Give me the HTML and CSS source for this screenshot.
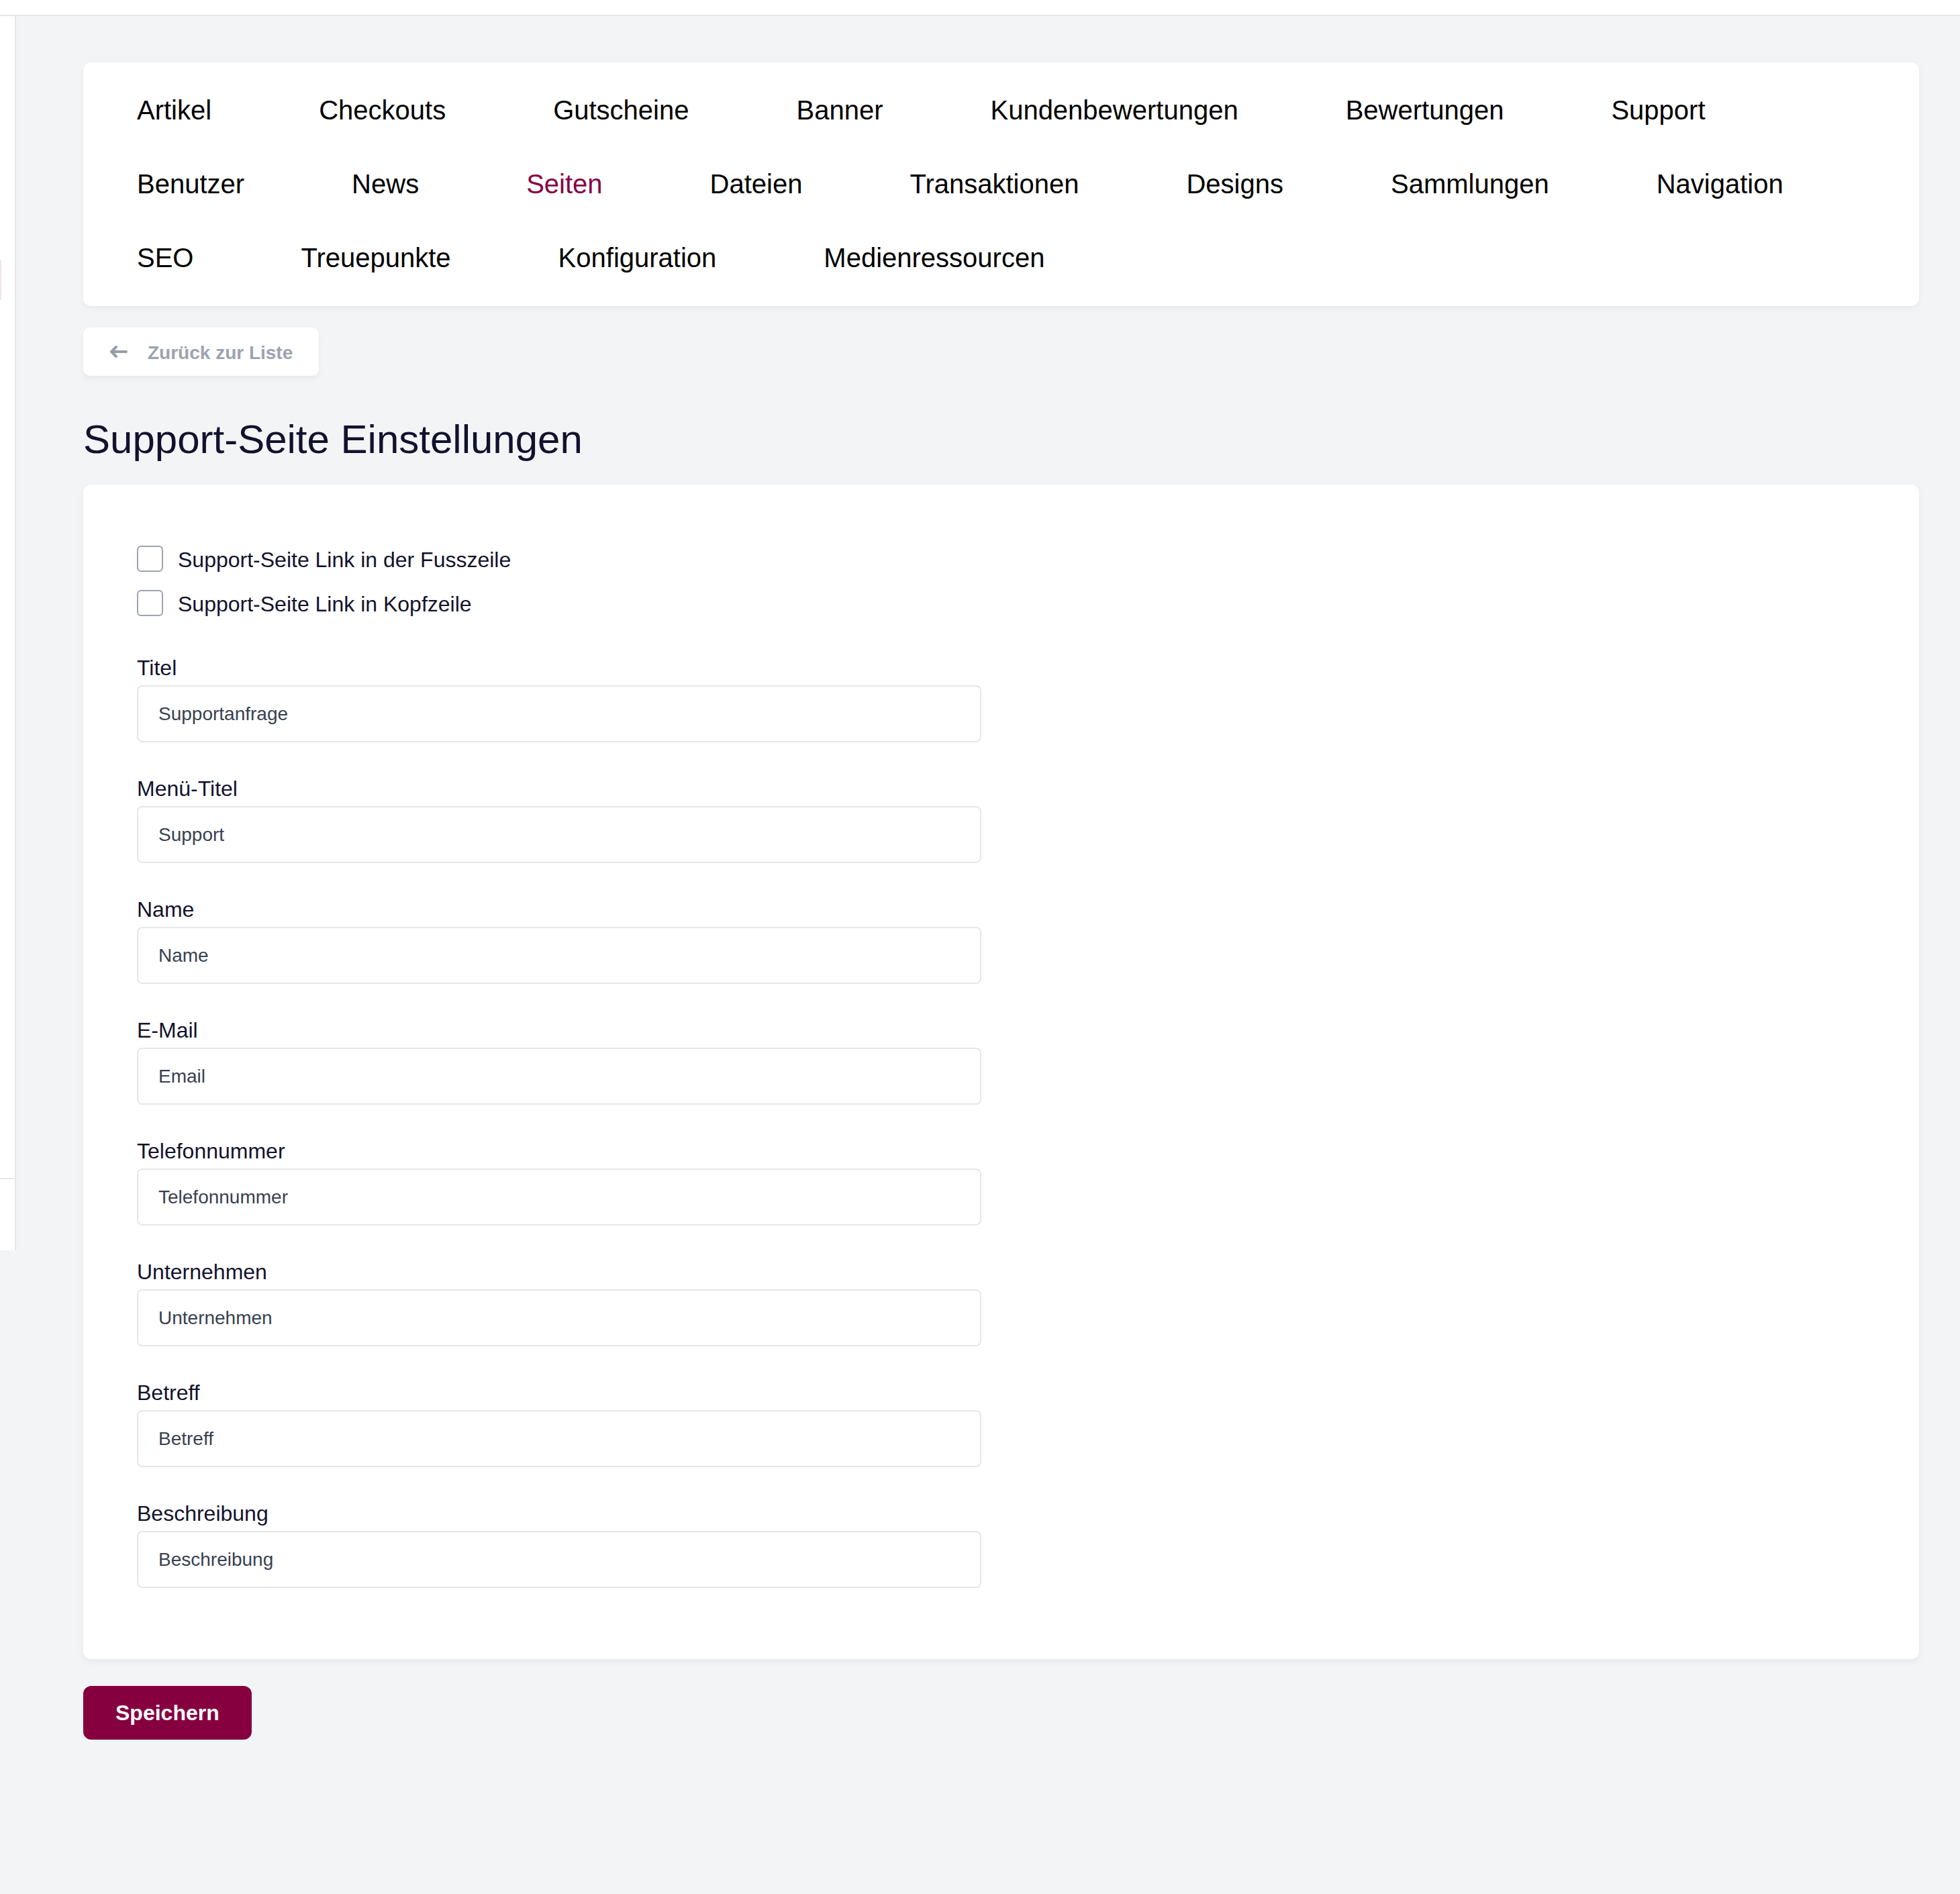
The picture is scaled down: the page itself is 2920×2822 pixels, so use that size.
FILE: index.html
```html
<!DOCTYPE html>
<html lang="de">
<head>
  <meta charset="UTF-8" />
  <meta name="viewport" content="width=device-width, initial-scale=1.0" />
  <title>Support-Seite Einstellungen</title>
  <link rel="stylesheet" href="styles.css">
</head>
<body>
  <div class="topbar"></div>

  <div class="layout">
    <aside class="sidebar">
      <div class="sidebar-main">
        <span class="sidebar-active"></span>
      </div>
      <div class="sidebar-foot"></div>
    </aside>

    <main class="content">
      <nav class="tabs">
        <a href="#">Artikel</a>
        <a href="#">Checkouts</a>
        <a href="#">Gutscheine</a>
        <a href="#">Banner</a>
        <a href="#">Kundenbewertungen</a>
        <a href="#">Bewertungen</a>
        <a href="#">Support</a>
        <a href="#">Benutzer</a>
        <a href="#">News</a>
        <a href="#" class="active">Seiten</a>
        <a href="#">Dateien</a>
        <a href="#">Transaktionen</a>
        <a href="#">Designs</a>
        <a href="#">Sammlungen</a>
        <a href="#">Navigation</a>
        <a href="#">SEO</a>
        <a href="#">Treuepunkte</a>
        <a href="#">Konfiguration</a>
        <a href="#">Medienressourcen</a>
      </nav>

      <a href="#" class="back-btn">
        <svg width="26" height="18" viewBox="0 0 26 18" fill="none" stroke="currentColor" stroke-width="4" stroke-linecap="round" stroke-linejoin="round">
          <path d="M2 9h22M9 2L2 9l7 7" />
        </svg>
        <span>Zurück zur Liste</span>
      </a>

      <h1 class="page-title">Support-Seite Einstellungen</h1>

      <form class="settings-card" onsubmit="return false">
        <div class="checks">
          <label class="check"><input type="checkbox"><span>Support-Seite Link in der Fusszeile</span></label>
          <label class="check"><input type="checkbox"><span>Support-Seite Link in Kopfzeile</span></label>
        </div>

        <div class="field">
          <label for="title">Titel</label>
          <input id="title" type="text" value="Supportanfrage">
        </div>
        <div class="field">
          <label for="menuTitle">Menü-Titel</label>
          <input id="menuTitle" type="text" value="Support">
        </div>
        <div class="field">
          <label for="name">Name</label>
          <input id="name" type="text" placeholder="Name">
        </div>
        <div class="field">
          <label for="email">E-Mail</label>
          <input id="email" type="text" placeholder="Email">
        </div>
        <div class="field">
          <label for="phone">Telefonnummer</label>
          <input id="phone" type="text" placeholder="Telefonnummer">
        </div>
        <div class="field">
          <label for="company">Unternehmen</label>
          <input id="company" type="text" placeholder="Unternehmen">
        </div>
        <div class="field">
          <label for="subject">Betreff</label>
          <input id="subject" type="text" placeholder="Betreff">
        </div>
        <div class="field">
          <label for="description">Beschreibung</label>
          <input id="description" type="text" placeholder="Beschreibung">
        </div>
      </form>

      <button class="save-btn" type="button">Speichern</button>
    </main>
  </div>
</body>
</html>
```

FILE: styles.css
```css
body {
  margin: 0;
  font-family: "Liberation Sans", Arial, sans-serif;
  background: #f3f4f6;
  color: #12122e;
  min-height: 2822px;
}
.topbar {
  height: 22px;
  background: #ffffff;
  border-bottom: 2px solid #e5e7eb;
}
.layout {
  display: flex;
  align-items: flex-start;
}
.sidebar {
  width: 22px;
  height: 1839px;
  flex-shrink: 0;
  background: #ffffff;
  border-right: 2px solid #e5e7eb;
  display: flex;
  flex-direction: column;
}
.sidebar-main {
  flex: 1;
}
.sidebar-active {
  display: block;
  width: 2px;
  height: 59px;
  margin-top: 364px;
  background: #f5dfee;
}
.sidebar-foot {
  height: 106px;
  border-top: 2px solid #e5e7eb;
}
.content {
  flex: 1;
  padding: 69px 61px 0 100px;
}
.tabs {
  display: flex;
  flex-wrap: wrap;
  column-gap: 160px;
  row-gap: 62px;
  padding: 47px 80px 48px;
  background: #ffffff;
  border-radius: 12px;
  box-shadow: 0 3px 10px rgba(0, 0, 0, 0.05);
}
.tabs a {
  font-size: 40px;
  line-height: 48px;
  color: #000000;
  text-decoration: none;
}
.tabs a.active {
  color: #870043;
}
.back-btn {
  display: flex;
  align-items: center;
  gap: 30px;
  width: fit-content;
  height: 72px;
  margin-top: 32px;
  padding: 0 39px 0 40px;
  box-sizing: border-box;
  background: #ffffff;
  border-radius: 10px;
  box-shadow: 0 4px 10px rgba(0, 0, 0, 0.05);
  color: #9ca3af;
  font-size: 28px;
  font-weight: bold;
  text-decoration: none;
}
.back-btn svg {
  display: block;
  color: #979ea6;
}
.back-btn span {
  padding-top: 3px;
}
.page-title {
  margin: 59px 0 31px;
  font-size: 60px;
  line-height: 72px;
  font-weight: normal;
  color: #12122e;
}
.settings-card {
  padding: 90px 80px 106px;
  background: #ffffff;
  border-radius: 12px;
  box-shadow: 0 4px 12px rgba(0, 0, 0, 0.05);
}
.checks {
  display: flex;
  flex-direction: column;
  gap: 26px;
  margin-bottom: 57px;
}
.check {
  display: flex;
  align-items: center;
  gap: 22px;
  height: 40px;
  font-size: 32px;
  line-height: 40px;
  color: #12122e;
}
.check span {
  padding-top: 4px;
}
.check input {
  appearance: none;
  width: 39px;
  height: 39px;
  margin: 0;
  border: 2px solid #9ca3af;
  border-radius: 6px;
  background: #ffffff;
}
.field {
  margin-bottom: 49px;
}
.field:last-child {
  margin-bottom: 0;
}
.field label {
  display: block;
  font-size: 32px;
  line-height: 40px;
  margin-bottom: 6px;
  color: #12122e;
}
.field input {
  display: block;
  width: 1258px;
  height: 85px;
  box-sizing: border-box;
  padding: 0 30px;
  border: 2px solid #e5e7eb;
  border-radius: 8px;
  font-family: "Liberation Sans", Arial, sans-serif;
  font-size: 28px;
  color: #374151;
  background: #ffffff;
  outline: none;
}
.field input::placeholder {
  color: #374151;
  opacity: 1;
}
.save-btn {
  display: block;
  height: 80px;
  margin-top: 40px;
  padding: 0 48px;
  border: none;
  border-radius: 12px;
  background: #86003f;
  color: #ffffff;
  font-family: "Liberation Sans", Arial, sans-serif;
  font-size: 32px;
  font-weight: bold;
  cursor: pointer;
}
```
